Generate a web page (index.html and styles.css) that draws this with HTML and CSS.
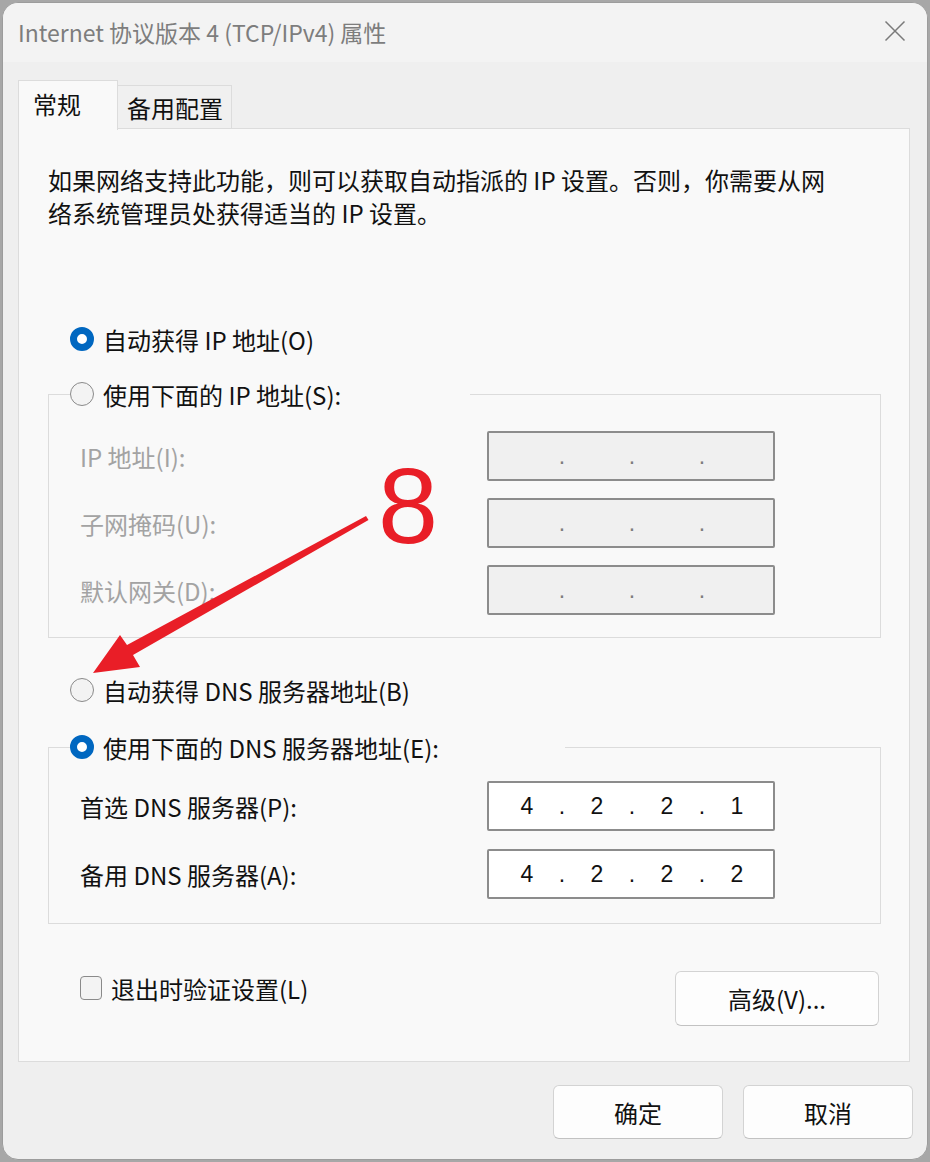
FILE: index.html
```html
<!DOCTYPE html>
<html lang="zh-CN">
<head>
<meta charset="utf-8">
<title>Internet 协议版本 4 (TCP/IPv4) 属性</title>
<link rel="stylesheet" href="styles.css">
</head>
<body>
<div class="window">
  <div class="titlebar">
    <span class="title">Internet 协议版本 4 (TCP/IPv4) 属性</span>
    <svg class="close" width="22" height="22" viewBox="0 0 22 22"><path d="M1.5 1.5 L20.5 20.5 M20.5 1.5 L1.5 20.5" stroke="#7a7a7a" stroke-width="1.5" fill="none"/></svg>
  </div>
  <div class="tabs">
    <div class="tab active">常规</div>
    <div class="tab">备用配置</div>
  </div>
  <div class="panel">
    <p class="desc">如果网络支持此功能，则可以获取自动指派的 IP 设置。否则，你需要从网<br>络系统管理员处获得适当的 IP 设置。</p>

    <div class="radio-row r1"><span class="radio checked"></span><span>自动获得 IP 地址(O)</span></div>

    <fieldset class="group g1">
      <legend class="legend l1"><span class="radio"></span><span>使用下面的 IP 地址(S):</span></legend>
      <div class="field first">
        <span class="label disabled">IP 地址(I):</span>
        <div class="ip off"><span class="seg"></span><span class="dot">.</span><span class="seg"></span><span class="dot">.</span><span class="seg"></span><span class="dot">.</span><span class="seg"></span></div>
      </div>
      <div class="field">
        <span class="label disabled">子网掩码(U):</span>
        <div class="ip off"><span class="seg"></span><span class="dot">.</span><span class="seg"></span><span class="dot">.</span><span class="seg"></span><span class="dot">.</span><span class="seg"></span></div>
      </div>
      <div class="field">
        <span class="label disabled">默认网关(D):</span>
        <div class="ip off"><span class="seg"></span><span class="dot">.</span><span class="seg"></span><span class="dot">.</span><span class="seg"></span><span class="dot">.</span><span class="seg"></span></div>
      </div>
    </fieldset>

    <div class="radio-row r3"><span class="radio"></span><span>自动获得 DNS 服务器地址(B)</span></div>

    <fieldset class="group g2">
      <legend class="legend l2"><span class="radio checked"></span><span>使用下面的 DNS 服务器地址(E):</span></legend>
      <div class="field first">
        <span class="label">首选 DNS 服务器(P):</span>
        <div class="ip"><span class="seg">4</span><span class="dot">.</span><span class="seg">2</span><span class="dot">.</span><span class="seg">2</span><span class="dot">.</span><span class="seg">1</span></div>
      </div>
      <div class="field dns2">
        <span class="label">备用 DNS 服务器(A):</span>
        <div class="ip"><span class="seg">4</span><span class="dot">.</span><span class="seg">2</span><span class="dot">.</span><span class="seg">2</span><span class="dot">.</span><span class="seg">2</span></div>
      </div>
    </fieldset>

    <div class="footer-row">
      <label class="check"><span class="box"></span><span>退出时验证设置(L)</span></label>
      <button class="btn adv">高级(V)...</button>
    </div>
  </div>
  <div class="actions">
    <button class="btn act">确定</button>
    <button class="btn act">取消</button>
  </div>
</div>

<svg class="annot" width="930" height="1162" viewBox="0 0 930 1162">
  <polygon points="366,516 368.5,520 133,655 140,667 93,673 120,635 127,645" fill="#e91e27"/>
</svg>
<div class="eight">8</div>
</body>
</html>
```

FILE: styles.css
```css
html, body {
  margin: 0;
  padding: 0;
}
body {
  width: 930px;
  height: 1162px;
  background: #a7a7a7;
  overflow: hidden;
  position: relative;
  font-family: "Noto Sans CJK SC", "Noto Sans", sans-serif;
  color: #111111;
}
.window {
  box-sizing: border-box;
  margin: 2px 0 0 2px;
  width: 926px;
  height: 1158px;
  border: 1px solid #9c9c9c;
  border-radius: 16px;
  background: #efefef;
  overflow: hidden;
}
.titlebar {
  height: 59px;
  background: #f3f3f3;
  display: flex;
  align-items: center;
  justify-content: space-between;
  padding: 0 21px 0 15px;
}
.title {
  font-size: 23px;
  color: #7d7d7d;
  margin-top: -2px;
}
.close {
  display: block;
  margin-top: -4px;
}
.tabs {
  height: 66px;
  display: flex;
  align-items: flex-end;
  padding-left: 15px;
  position: relative;
  z-index: 1;
}
.tab {
  box-sizing: border-box;
  font-size: 24px;
  line-height: 1;
  display: flex;
  align-items: center;
}
.tab.active {
  height: 50px;
  width: 100px;
  margin-bottom: -2px;
  background: #f9f9f9;
  border: 1px solid #dcdcdc;
  border-bottom: none;
  padding: 0 0 4px 14px;
}
.tab:not(.active) {
  height: 43px;
  width: 114px;
  background: #f0f0f0;
  border: 1px solid #dcdcdc;
  border-left: none;
  border-bottom: none;
  padding: 2px 0 0 9px;
}
.panel {
  box-sizing: border-box;
  margin: 0 17px 0 15px;
  height: 934px;
  background: #f9f9f9;
  border: 1px solid #dcdcdc;
  padding: 0 28px 0 29px;
  display: flex;
  flex-direction: column;
}
.desc {
  margin: 34px 0 0 0;
  font-size: 24px;
  line-height: 33px;
  white-space: nowrap;
}
.radio-row, .legend {
  display: flex;
  align-items: center;
  height: 34px;
  font-size: 24px;
  white-space: nowrap;
}
.radio-row {
  margin-left: 22px;
}
.r1 { margin-top: 93px; }
.r3 { margin-top: 35px; }
.radio {
  box-sizing: border-box;
  width: 24px;
  height: 24px;
  border-radius: 50%;
  border: 1.5px solid #8a8a8a;
  background: #f3f3f3;
  margin-right: 9px;
  flex: none;
}
.radio.checked {
  border: 7px solid #0067c0;
  background: #ffffff;
}
.group {
  margin: 0;
  border: 1px solid #dcdcdc;
  padding: 0 0 22px 21px;
  min-inline-size: 0;
}
.g1 { margin-top: 21px; }
.g2 { margin-top: 23px; padding-bottom: 24px; }
.legend {
  padding: 0;
  margin: 0;
}
.l1 { width: 400px; }
.l2 { width: 495px; }
.field {
  display: flex;
  align-items: center;
  height: 50px;
  margin-left: 10px;
  margin-top: 17px;
}
.field.first { margin-top: 20px; }
.g2 .field.first { margin-top: 17px; }
.g2 .dns2 { margin-top: 18px; }
.label {
  width: 407px;
  font-size: 24px;
  white-space: nowrap;
}
.label.disabled {
  color: #a3a3a3;
}
.ip {
  box-sizing: border-box;
  width: 288px;
  height: 50px;
  border: 2px solid #8c8c8c;
  border-radius: 2px;
  background: #ffffff;
  display: flex;
  align-items: center;
  padding-left: 21px;
  font-family: "Liberation Sans", sans-serif;
  font-size: 23px;
  color: #111111;
}
.ip.off {
  background: #f0f0f0;
  color: #7d7d7d;
}
.seg {
  width: 34px;
  text-align: center;
}
.dot {
  width: 36px;
  text-align: center;
}
.footer-row {
  display: flex;
  justify-content: space-between;
  align-items: flex-start;
  margin-top: 47px;
  padding-right: 2px;
}
.check {
  display: flex;
  align-items: center;
  height: 34px;
  margin-left: 32px;
  font-size: 24px;
  white-space: nowrap;
}
.box {
  box-sizing: border-box;
  width: 22px;
  height: 24px;
  border: 1.5px solid #8a8a8a;
  border-radius: 4px;
  background: #f3f3f3;
  margin-right: 9px;
}
.btn {
  box-sizing: border-box;
  font-family: "Noto Sans CJK SC", "Noto Sans", sans-serif;
  font-size: 24px;
  color: #111111;
  background: #fdfdfd;
  border: 1px solid #d3d3d3;
  border-bottom-color: #c2c2c2;
  border-radius: 6px;
  padding: 0;
}
.adv {
  width: 204px;
  height: 55px;
}
.actions {
  display: flex;
  justify-content: flex-end;
  gap: 20px;
  margin-top: 23px;
  padding-right: 14px;
}
.act {
  width: 170px;
  height: 54px;
}
.annot {
  position: absolute;
  left: 0;
  top: 0;
  pointer-events: none;
}
.eight {
  position: absolute;
  left: 378px;
  top: 452px;
  font-family: "Liberation Sans", sans-serif;
  font-size: 108px;
  line-height: 1;
  color: #e91e27;
}
```
